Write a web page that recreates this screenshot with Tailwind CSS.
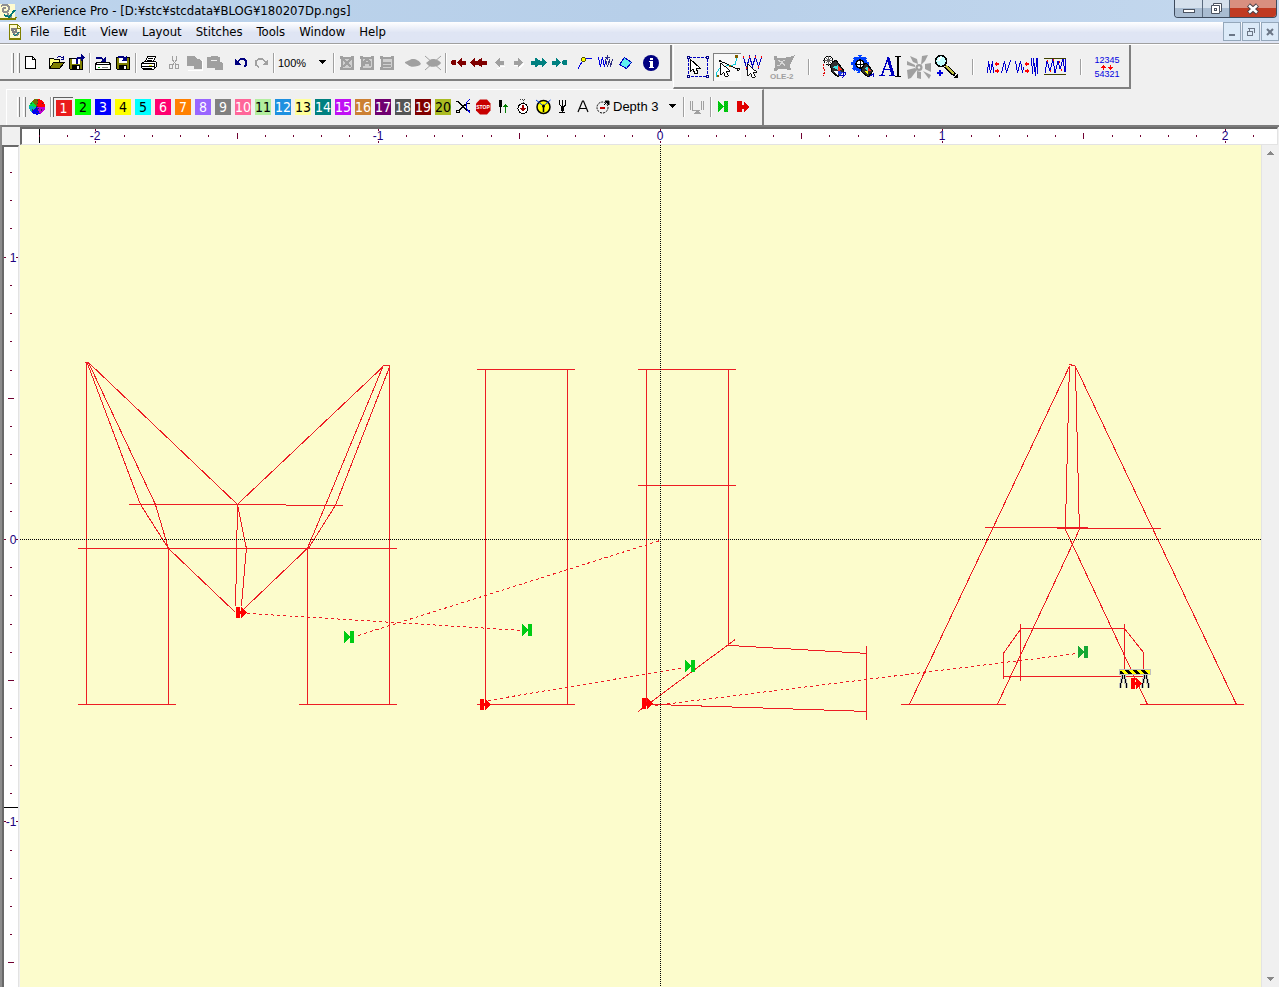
<!DOCTYPE html>
<html lang="en">
<head>
<meta charset="utf-8">
<title>eXPerience Pro</title>
<script src="https://cdn.jsdelivr.net/npm/@tailwindcss/browser@4"></script>
</head>
<body class="flex h-screen flex-col overflow-hidden bg-[#f0f0f0] font-['DejaVu_Sans_Condensed','DejaVu_Sans',sans-serif] text-[13px] text-black">

<!-- Shared symbols -->
<svg class="absolute h-0 w-0" aria-hidden="true">
  <defs>
    <pattern id="gdots" width="2" height="2" patternUnits="userSpaceOnUse"><rect width="2" height="2" fill="#00e800"/><path d="M0 0h1v1h-1zM1 1h1v1h-1z" fill="#00a01c"/></pattern>
    <symbol id="start" viewBox="0 0 12 12"><path d="M1 0l6 6-6 6zM7 0h4v12h-4zM6 5h1v2h-1z" fill="currentColor"/></symbol>
    <symbol id="end" viewBox="0 0 12 12"><path d="M1 1h4v11h-4zM5 5h2v3h-2zM6 1l6 5-6 6z" fill="#f00"/></symbol>
    <symbol id="cursor" viewBox="0 0 12 18"><path d="M1 1v13l3-3 2 5 3-1-2-5h4z" fill="#fff" stroke="#000"/></symbol>
  </defs>
</svg>

<header class="flex h-[22px] shrink-0 items-center bg-linear-to-r from-[#bdd4ec] via-[#b7cfe9] to-[#c4d8ee]">
  <svg class="h-5 w-[17px] shrink-0" viewBox="0 0 17 20" shape-rendering="crispEdges"><path d="M0 3h15v14h-15z" fill="#fffbd0"/><path d="M0 18h15l1-2" stroke="#808000" stroke-width="2" fill="none"/><path d="M1 5c4-3 9-1 8 3s-5 4-6 2 1-4 3-3M7 11l2 5h3" fill="none" stroke="#909090" stroke-width="2"/><path d="M4 14l5 2 6-7" fill="none" stroke="#007878" stroke-width="2"/></svg>
  <h1 class="ml-1 grow whitespace-nowrap">eXPerience Pro - [D:¥stc¥stcdata¥BLOG¥180207Dp.ngs]</h1>
  <div class="mr-0.5 flex h-[18px] self-start overflow-hidden rounded-b-sm border border-t-0 border-[#3d4a5c]">
    <button aria-label="Minimize" class="flex w-7 items-center justify-center border-r border-[#5a6a7e] bg-linear-to-b from-[#d5e0ec] from-50% to-[#a9bcd1] to-50%"><svg class="h-4 w-4" viewBox="0 0 16 16"><rect x="2.500" y="8.500" width="11" height="3" fill="#fff" stroke="#4a5260"/></svg></button>
    <button aria-label="Restore" class="flex w-[27px] items-center justify-center border-r border-[#5a6a7e] bg-linear-to-b from-[#d5e0ec] from-50% to-[#a9bcd1] to-50%"><svg class="h-4 w-4" viewBox="0 0 16 16"><path d="M5.500 2.500h8v8h-2v2h-8v-8h2z" fill="#fff" stroke="#4a5260"/><path d="M5.500 4.500h6v6" fill="none" stroke="#4a5260"/><rect x="6.500" y="7.500" width="2" height="2" fill="#fff" stroke="#4a5260"/></svg></button>
    <button aria-label="Close" class="flex w-[46px] items-center justify-center bg-linear-to-b from-[#d98f80] from-45% to-[#c03a22] to-45%"><svg class="h-4 w-4" viewBox="0 0 16 16"><path d="M3.500 4l9 8M12.500 4l-9 8" stroke="#4a4048" stroke-width="4.500"/><path d="M4 4.500l8 7M12 4.500l-8 7" stroke="#fff" stroke-width="2.500"/></svg></button>
  </div>
</header>

<nav class="flex h-[22px] shrink-0 items-center border-b border-[#a0a0a0] bg-linear-to-b from-white via-[#dfe5f4] to-[#dfe5f4] pb-0.5">
  <svg class="ml-2 h-4 w-[14px] shrink-0" viewBox="0 0 14 16" shape-rendering="crispEdges"><path d="M1.500 .5h8l3 3v11h-11z" fill="#fffbd0" stroke="#808000"/><path d="M9 1v3h3" fill="none" stroke="#808000"/><path d="M4 5h4v3h-3zM5 10l4 1 2-3" fill="none" stroke="#808080" stroke-width="2"/><path d="M5 10l2 2 4-4" fill="none" stroke="#008080"/><path d="M1 15h12" stroke="#808000" stroke-width="2"/></svg>
  <div class="ml-2 flex grow gap-[14px]">
    <button>File</button><button>Edit</button><button>View</button><button>Layout</button><button>Stitches</button><button>Tools</button><button>Window</button><button>Help</button>
  </div>
  <div class="flex h-[19px] gap-px text-[#6b7686]">
    <button aria-label="Minimize document" class="flex w-[18px] items-center justify-center border border-[#94a7ba] bg-[#dceaf8]"><svg class="h-4 w-4" viewBox="0 0 16 16" shape-rendering="crispEdges"><path d="M5 10h6v2h-6z" fill="currentColor"/></svg></button>
    <button aria-label="Restore document" class="flex w-[18px] items-center justify-center border border-[#94a7ba] bg-[#dceaf8]"><svg class="h-4 w-4" viewBox="0 0 16 16" shape-rendering="crispEdges"><path d="M5 4.500h7M11.500 4v5M6.500 5v2M4 7.500h6M4.500 7v5M4 11.500h6M9.500 7v5" stroke="currentColor" fill="none"/></svg></button>
    <button aria-label="Close document" class="flex w-[18px] items-center justify-center border border-[#94a7ba] bg-[#dceaf8]"><svg class="h-4 w-4" viewBox="0 0 16 16"><path d="M5 5l6 6M11 5l-6 6" stroke="currentColor" stroke-width="2"/></svg></button>
  </div>
</nav>

<div class="shrink-0 border-t border-white" role="toolbar" aria-label="Toolbars">
  <div class="flex h-11 items-start">
    <!-- Standard toolbar -->
    <div class="flex h-9 w-[672px] shrink-0 items-center border-r-2 border-b-2 border-[#808080] pt-[2px] pl-[11px]">
      <div class="mr-[1px] flex gap-1"><i class="h-5 w-[3px] border-l border-r border-l-white border-r-[#808080]"></i><i class="-ml-px h-5 w-[3px] border-l border-r border-l-white border-r-[#808080]"></i></div>
      <button aria-label="New" class="h-5 w-5"><svg viewBox="0 0 20 20" shape-rendering="crispEdges"><path d="M4.500 3.500h7l3 3v9h-10z" fill="#fff" stroke="#000"/><path d="M11.500 3.500v3h3" fill="none" stroke="#000"/></svg></button>
      <button aria-label="Open" class="ml-[6px] h-5 w-5"><svg viewBox="0 0 20 20" shape-rendering="crispEdges"><path d="M2.500 15.500v-10h4l1 1h5v3" fill="#ffff80" stroke="#000"/><path d="M2.500 15.500l4-6h11l-5 6z" fill="#808000" stroke="#000"/><path d="M10 4.500h1M11 3.500h3M14 4.500h2M16.500 3v4M14 6.500h3" stroke="#000080"/></svg></button>
      <button aria-label="Save as" class="h-5 w-5"><svg viewBox="0 0 20 20" shape-rendering="crispEdges"><path d="M2.500 5.500h13v11h-12l-1-1z" fill="#808000" stroke="#000"/><path d="M5 6h8v5h-8z" fill="#fff"/><path d="M5 12h8v4h-8z" fill="#000"/><path d="M10 13h2v3h-2z" fill="#fff"/><path d="M9.500 11v-4l2-2.500h4" fill="none" stroke="#000080" stroke-width="2"/><path d="M14 1l4 3.500-4 3.500z" fill="#000080"/></svg></button>
      <i class="mx-[2px] h-5 w-[2px] border-l border-r border-l-[#a0a0a0] border-r-white"></i>
      <button aria-label="Read design" class="h-5 w-5"><svg viewBox="0 0 20 20" shape-rendering="crispEdges"><path d="M3.500 9.500h13l1 2v5h-15v-5z" fill="#fff" stroke="#000"/><path d="M3 11.500h15" stroke="#000"/><path d="M5 14h2v1h-2z" fill="#00b000"/><path d="M9 14.500h6" stroke="#808080"/><path d="M3 4.500h5l3 3" fill="none" stroke="#000080" stroke-width="2"/><path d="M7 9h6v-6z" fill="#000080"/></svg></button>
      <button aria-label="Save design" class="h-5 w-5"><svg viewBox="0 0 20 20" shape-rendering="crispEdges"><path d="M3.500 4.500h13v12h-12l-1-1z" fill="#808000" stroke="#000"/><path d="M6 5h8v5h-8z" fill="#fff"/><path d="M6 12h8v4h-8z" fill="#000"/><path d="M11 13h2v3h-2z" fill="#fff"/><path d="M5 3.500h5l2 3" fill="none" stroke="#000080" stroke-width="2"/><path d="M8 8h6v-5z" fill="#000080"/></svg></button>
      <i class="mx-[2px] h-5 w-[2px] border-l border-r border-l-[#a0a0a0] border-r-white"></i>
      <button aria-label="Print" class="h-5 w-5"><svg viewBox="0 0 20 20" shape-rendering="crispEdges"><path d="M6.500 8.500l2-5h8l-2 5z" fill="#fff" stroke="#000"/><path d="M9 5.500h5M8 7.500h5" stroke="#000"/><path d="M2.500 10.500l3-2h11l1 1v4l-3 3h-10l-2-2z" fill="#fff" stroke="#000"/><path d="M2 10.500h13M2 13.500h13M15.500 10v6M4 15.500h9" stroke="#000" stroke-width="1"/><path d="M10 12h3v1h-3z" fill="#dede00"/></svg></button>
      <button aria-label="Cut" disabled class="ml-[5px] h-5 w-5"><svg viewBox="0 0 20 20" shape-rendering="crispEdges" fill="none" stroke="#a0a0a0"><path d="M8.500 3v4l4 5M12.500 3v4l-4 5"/><rect x="5.500" y="11.500" width="3" height="4"/><rect x="11.500" y="11.500" width="3" height="4"/></svg></button>
      <button aria-label="Copy" disabled class="h-5 w-5"><svg viewBox="0 0 20 20" shape-rendering="crispEdges"><path d="M4 17h7M18 7v10h-7" stroke="#fff" fill="none"/><path d="M3 3h7l3 3h2l3 3v7h-8v-3h-7z" fill="#a0a0a0"/></svg></button>
      <button aria-label="Paste" disabled class="h-5 w-5"><svg viewBox="0 0 20 20" shape-rendering="crispEdges"><path d="M3 4h3l1-1h6l1 1h2v5h1l2 2v6h-8v-2h-8z" fill="#a0a0a0"/><path d="M7 7h6" stroke="#f0f0f0"/></svg></button>
      <button aria-label="Undo" class="ml-[7px] h-5 w-5"><svg viewBox="0 0 20 20" shape-rendering="crispEdges"><path d="M4 6v6h6z" fill="#000080"/><path d="M6 9l4-3h3l2 2v4l-2 2" fill="none" stroke="#000080" stroke-width="1.500"/></svg></button>
      <button aria-label="Redo" disabled class="h-5 w-5"><svg viewBox="0 0 20 20" shape-rendering="crispEdges"><path d="M17 6v6h-6z" fill="#a0a0a0"/><path d="M15 9l-4-3h-3l-3 2v4l3 2" fill="none" stroke="#a0a0a0" stroke-width="1.500"/></svg></button>
      <i class="mx-[2px] h-5 w-[2px] border-l border-r border-l-[#a0a0a0] border-r-white"></i>
      <div class="relative h-5 w-[54px]">
        <select aria-label="Zoom" class="h-5 w-full appearance-none bg-transparent pb-0.5 pl-px font-['Liberation_Sans',sans-serif] text-[11px]"><option>100%</option></select>
        <svg class="pointer-events-none absolute top-1.5 right-[5px] h-2 w-2" viewBox="0 0 8 8" shape-rendering="crispEdges"><path d="M0 1h8l-4 4z"/></svg>
      </div>
      <i class="mx-[2px] h-5 w-[2px] border-l border-r border-l-[#a0a0a0] border-r-white"></i>
      <button aria-label="Scale" disabled class="h-5 w-5"><svg viewBox="0 0 20 20" shape-rendering="crispEdges"><path d="M5 5h11v11h-11z" fill="#d0d0d0"/><path d="M4.500 5v11M15.500 5v11M4 4.500h12M4 15.500h12M6 6l8 8M14 6l-8 8" stroke="#a0a0a0" stroke-width="2"/><path d="M3 3h3v3h-3zM14 3h3v3h-3zM3 14h3v3h-3zM14 14h3v3h-3z" fill="#a0a0a0"/></svg></button>
      <button aria-label="Center" disabled class="h-5 w-5"><svg viewBox="0 0 20 20" shape-rendering="crispEdges"><path d="M5 5h11v11h-11z" fill="#d0d0d0"/><path d="M4.500 5v11M15.500 5v11M4 4.500h12M4 15.500h12M7 13v-4l3-3 3 3v4M8 10h4" stroke="#a0a0a0" stroke-width="2" fill="none"/><path d="M3 3h3v3h-3zM14 3h3v3h-3zM3 14h3v3h-3zM14 14h3v3h-3z" fill="#a0a0a0"/></svg></button>
      <button aria-label="Fit" disabled class="h-5 w-5"><svg viewBox="0 0 20 20" shape-rendering="crispEdges"><path d="M5 5h11v11h-11z" fill="#d0d0d0"/><path d="M4.500 5v11M15.500 5v11M4 4.500h12M4 15.500h12M6 10h8M6 13h8" stroke="#a0a0a0" stroke-width="2"/><path d="M3 3h3v3h-3zM14 3h3v3h-3zM3 14h3v3h-3zM14 14h3v3h-3z" fill="#a0a0a0"/></svg></button>
      <button aria-label="Show" disabled class="ml-[6px] h-5 w-5"><svg viewBox="0 0 20 20"><path d="M4 12q7 4 14-1" stroke="#fff" fill="none"/><path d="M2 9c4-1 5-3 8-3s7 2 8 5c-2 3-11 4-13 1l-3-2z" fill="#a0a0a0"/></svg></button>
      <button aria-label="Hide" disabled class="h-5 w-5"><svg viewBox="0 0 20 20"><path d="M2 3l16 14M18 3l-16 14" stroke="#a0a0a0"/><path d="M3 10c3-2 4-4 7-4s7 2 8 4c-2 4-11 5-13 2z" fill="#a0a0a0"/></svg></button>
      <i class="mx-[2px] h-5 w-[2px] border-l border-r border-l-[#a0a0a0] border-r-white"></i>
      <button aria-label="To start" class="h-5 w-5"><svg viewBox="0 0 20 20" shape-rendering="crispEdges" fill="#800000"><path d="M3 7h3l1 1v3l-1 1h-3l-1-1v-3zM8 9.500l5-5v3h4v4h-4v3z"/></svg></button>
      <button aria-label="Back fast" class="h-5 w-5"><svg viewBox="0 0 20 20" shape-rendering="crispEdges" fill="#800000"><path d="M1 9.500l5-5v3h3l4-3v3h5v4h-5v3l-4-3h-3v3z"/></svg></button>
      <button aria-label="Back" disabled class="h-5 w-5"><svg viewBox="0 0 20 20" shape-rendering="crispEdges"><path d="M8 15h2v-2h6" stroke="#fff" fill="none"/><path d="M6 9.500l5-5v3h4v4h-4v3z" fill="#a0a0a0"/></svg></button>
      <button aria-label="Forward" disabled class="h-5 w-5"><svg viewBox="0 0 20 20" shape-rendering="crispEdges"><path d="M5 12.500h5v3l5-5" stroke="#fff" fill="none"/><path d="M14 9.500l-5-5v3h-4v4h4v3z" fill="#a0a0a0"/></svg></button>
      <button aria-label="Forward fast" class="h-5 w-5"><svg viewBox="0 0 20 20" shape-rendering="crispEdges" fill="#008080"><path d="M18 9.500l-5-5v3h-2l-5-3v3h-4v4h4v3l5-3h2v3z"/></svg></button>
      <button aria-label="To end" class="h-5 w-5"><svg viewBox="0 0 20 20" shape-rendering="crispEdges" fill="#008080"><path d="M14 7h3l1 1v3l-1 1h-3l-1-1v-3zM12 9.500l-5-5v3h-4v4h4v3z"/></svg></button>
      <button aria-label="Outline view" class="ml-[6px] h-5 w-5"><svg viewBox="0 0 20 20" shape-rendering="crispEdges"><path d="M3 16l5-9 1-1 8-1" fill="none" stroke="#0000e0"/><circle cx="8.500" cy="6.500" r="2" fill="#ff0" stroke="#505000"/></svg></button>
      <button aria-label="Stitch view" class="h-5 w-5"><svg viewBox="0 0 20 20" shape-rendering="crispEdges" fill="none"><path d="M3.500 4l2 10 2-10 2 10 2-10" stroke="#0000e0"/><path d="M10.500 6l2 8 2-8 1 8 2-8M12.500 2v5M10 4.500h5" stroke="#303080"/></svg></button>
      <button aria-label="Solid view" class="h-5 w-5"><svg viewBox="0 0 20 20" shape-rendering="crispEdges"><path d="M9.500 4.500l7 5-5 6-7-4z" fill="#60f0f0" stroke="#0000c0"/></svg></button>
      <button aria-label="Information" class="ml-[6px] h-5 w-5"><svg viewBox="0 0 20 20"><circle cx="10" cy="10" r="8" fill="#000080"/><path d="M9 5h3v2h-3zM8 8h4v6h1v1h-5v-1h1v-5h-1z" fill="#fff"/></svg></button>
    </div>

    <!-- Tool selection -->
    <div class="ml-px flex h-11 w-[458px] shrink-0 items-center border-r-2 border-b-2 border-l border-[#808080] border-l-white pt-[2px] pl-[10px]">
      <button aria-label="Select" class="h-7 w-7"><svg viewBox="0 0 28 28" shape-rendering="crispEdges"><rect x="4.500" y="4.500" width="19" height="19" fill="none" stroke="#0000c0" stroke-dasharray="3 1"/><path d="M3.500 3.500h2v2h-2zM22.500 3.500h2v2h-2zM3.500 22.500h2v2h-2zM22.500 22.500h2v2h-2z" fill="#fff" stroke="#000080"/><use href="#cursor" x="5" y="5" width="12" height="18"/></svg></button>
      <button aria-label="Edit outline" aria-pressed="true" class="mx-px flex h-7 w-7 items-center justify-center border-t border-l border-[#808080] bg-[#f8f8f8]"><svg viewBox="0 0 28 28" shape-rendering="crispEdges"><path d="M3 24v-5l3-4 8-3 8-1 2-9" fill="none" stroke="#00c8d8"/><path d="M6 7l19 9" stroke="#000"/><path d="M5.500 6.500h1v1h-1zM24 15h2v2h-2z" stroke="#000" fill="#fff"/><path d="M3 22h2v2h-2zM16 11h2v2h-2zM22 1h3v3h-3z" fill="#806000"/><use href="#cursor" x="6" y="8" width="12" height="18"/></svg></button>
      <button aria-label="Edit stitches" class="-ml-[3px] h-7 w-7"><svg viewBox="0 0 28 28" shape-rendering="crispEdges"><path d="M4.500 4l3 11 3-11 3 9 3-9 3 10 3-10" fill="none" stroke="#0000c0"/><path d="M4 3h1v2h-1zM10 3h1v2h-1zM16 3h1v2h-1zM22 3h1v2h-1zM7 14h1v2h-1zM19 13h1v2h-1z" fill="#f00"/><use href="#cursor" x="8" y="10" width="11" height="17"/></svg></button>
      <button aria-label="OLE-2" disabled class="ml-[2px] h-7 w-7"><svg viewBox="0 0 28 28" shape-rendering="crispEdges"><path d="M5 3h3v2h9v-1h3l6-2-4 8-1 3 1 4h-4l-1-1h-8l-1 2h-3v-3l1-1v-6l-1-1z" fill="#a0a0a0"/><path d="M9 7l3 2 4-2M8 12h3l2-3 3 4" stroke="#d8d8d8" fill="none"/><text x="1" y="26" font-family="Liberation Sans" font-size="8" font-weight="bold" fill="#a0a0a0">OLE-2</text></svg></button>
      <i class="mx-[11px] h-4 w-[2px] border-l border-r border-l-[#a0a0a0] border-r-white"></i>
      <button aria-label="Thread colors" class="h-7 w-7"><svg viewBox="0 0 28 28" shape-rendering="crispEdges"><path d="M4 8l-2 6 2 4-2 5" fill="none" stroke="#e00000" stroke-dasharray="2 1"/><path d="M9 11l6-4 8 11-6 6-6-5z" fill="#303030" stroke="#000"/><path d="M11 14l6-2v5z" fill="#40e0e0"/><path d="M17 12l4 5-4 1z" fill="#ff3020"/><path d="M12 18h5v4z" fill="#fff"/><path d="M17 18l5 1-4 4z" fill="#2040e0"/><circle cx="7.500" cy="7.500" r="4.500" fill="#fff" stroke="#000"/><path d="M5 5l5 5M10 5l-5 5M7.500 3v9M3 7.500h9" stroke="#606060"/><path d="M18 22h4v-3h2v3l-3 3" stroke="#0000c0" fill="none"/></svg></button>
      <button aria-label="Machine settings" class="h-7 w-7"><svg viewBox="0 0 28 28" shape-rendering="crispEdges"><circle cx="11" cy="11" r="6" fill="#fff" stroke="#0040ff" stroke-width="3"/><circle cx="11" cy="11" r="8" fill="none" stroke="#0040ff" stroke-width="2" stroke-dasharray="3 3"/><path d="M12 12l5-2 7 8-5 6-6-5z" fill="#303030" stroke="#000"/><path d="M15 15l4-1v4z" fill="#40e0e0"/><path d="M19 14l3 4h-3z" fill="#ff3020"/><path d="M15 18h4v4z" fill="#ff0"/><circle cx="11" cy="11" r="4" fill="#fff" stroke="#000" stroke-width="1.500"/><path d="M8 11h6M11 8v6" stroke="#000"/><path d="M20 24l4-3v3" stroke="#0000c0" fill="none"/></svg></button>
      <button aria-label="Text" class="h-7 w-7"><svg viewBox="0 0 28 28" shape-rendering="crispEdges"><path d="M2 22.500h6M12 22.500h6M5 22l6-17 5 17M7 16.500h8" stroke="#0000c0" stroke-width="1.500" fill="none"/><path d="M11 5l5 17" stroke="#0000c0" stroke-width="3"/><path d="M18 3.500h2l1 1 1-1h2M18 23.500h2l1-1 1 1h2M21 4v19" stroke="#000" fill="none" stroke-width="1.500"/></svg></button>
      <button aria-label="Pattern" disabled class="h-7 w-7"><svg viewBox="0 0 28 28"><g fill="#a0a0a0"><path d="M5 3l7 3 1 5-5-2zM17 3l6-1-3 6-4 4zM2 8l8 4v2l-8-2zM20 11l6-1v9l-6-3zM2 17l8-2 2 2-6 8-3 1zM12 18l4 1v7l-4-1zM18 18l8 4-2 4z"/><circle cx="14" cy="14.500" r="3.500"/></g><circle cx="14" cy="14.500" r="1.200" fill="#f0f0f0"/></svg></button>
      <button aria-label="Zoom tool" class="h-7 w-7"><svg viewBox="0 0 28 28" shape-rendering="crispEdges"><path d="M12 13l10 9" stroke="#000" stroke-width="4"/><path d="M13 13l8 8" stroke="#c0c040" stroke-width="2"/><path d="M20 25h5v-4z"/><circle cx="8" cy="8" r="5.500" fill="#c0ffff" stroke="#000" stroke-width="1.500"/><path d="M5 8l3-4" stroke="#fff" stroke-width="2"/><path d="M4 20h6M7 17v6" stroke="#0000e0" stroke-width="2"/></svg></button>
      <i class="mx-[11px] h-4 w-[2px] border-l border-r border-l-[#a0a0a0] border-r-white"></i>
      <button aria-label="Decrease density" class="h-7 w-7"><svg viewBox="0 0 28 28" shape-rendering="crispEdges" fill="none"><path d="M2.500 20l1-12 2 12 2-12 1 12M16.500 20l3-12 2 12 4-13" stroke="#0000d0"/><path d="M10 10h4v2h-4zM10 17h4v2h-4z" fill="#f00"/><path d="M11 9h1v4h-1zM12 16h1v4h-1z" fill="#f00"/></svg></button>
      <button aria-label="Increase density" class="h-7 w-7"><svg viewBox="0 0 28 28" shape-rendering="crispEdges" fill="none"><path d="M2.500 8l2 12 3-12 2 12 1-6M18.500 5l1 16 1-16 2 18 1-18 1 16v-16" stroke="#0000d0"/><path d="M12 10h4v2h-4zM12 17h4v2h-4z" fill="#f00"/><path d="M13 9h1v4h-1zM14 16h1v4h-1z" fill="#f00"/></svg></button>
      <button aria-label="Fit stitches" class="h-7 w-7"><svg viewBox="0 0 28 28" shape-rendering="crispEdges" fill="none"><path d="M3 5.500h22M3 21.500h22" stroke="#404000"/><path d="M4 20l2-12 3 10 3-12 2 14 3-12 2 8 3-10 2 13v-13" stroke="#0000d0"/><path d="M6 7v2M12 6v2M18 8v2M9 17v2M20 16v2" stroke="#f00"/></svg></button>
      <i class="mx-[11px] h-4 w-[2px] border-l border-r border-l-[#a0a0a0] border-r-white"></i>
      <button aria-label="Reverse order" class="flex h-[23px] w-7 flex-col items-center justify-between font-['Liberation_Sans',sans-serif] text-[9px] leading-[9px] text-[#0000e0]"><span>12345</span><svg class="h-[5px] w-[14px] shrink-0" viewBox="0 0 14 5" shape-rendering="crispEdges" fill="#f00"><path d="M3 0h1v5h-1zM1 2h5v1h-5zM2 1h3v1h-3zM10 0h1v5h-1zM8 2h5v1h-5zM9 3h3v1h-3z"/></svg><span>54321</span></button>
    </div>
  </div>

  <!-- Color and command toolbar -->
  <div class="ml-1.5 flex h-9 w-[758px] items-center border-t border-r-2 border-l border-[#808080] border-t-white border-l-white pb-px pl-[10px]">
    <div class="flex gap-1"><i class="h-5 w-[3px] border-l border-r border-l-white border-r-[#808080]"></i><i class="-ml-px h-5 w-[3px] border-l border-r border-l-white border-r-[#808080]"></i></div>
    <button aria-label="Color wheel" class="mx-px h-5 w-5"><svg viewBox="0 0 20 20" shape-rendering="crispEdges"><path d="M10 10L5 4a8 8 0 0 1 6-2z" fill="#707000"/><path d="M10 10L11 2a8 8 0 0 1 7 8z" fill="#f00"/><path d="M10 10h8a8 8 0 0 1-5 7z" fill="#c000d0"/><path d="M10 10l3 7a8 8 0 0 1-9-2z" fill="#0000f0"/><path d="M10 10l-6 5a8 8 0 0 1-2-6z" fill="#00b0c0"/><path d="M10 10L2 9a8 8 0 0 1 3-5z" fill="#00e040"/><path d="M10 3v14M4 6l12 8M16 6l-12 8" stroke="#403040" stroke-dasharray="1 2"/></svg></button>
    <i class="ml-[2px] h-5 w-[2px] border-l border-r border-l-[#a0a0a0] border-r-white"></i>
    <div id="palette" class="ml-px flex"></div>
    <button aria-label="Trim" class="h-5 w-5"><svg viewBox="0 0 20 20" shape-rendering="crispEdges"><path d="M3 4.500h2l5 5 4 4h3M17 6.500h-3l-4 3-4 4" stroke="#000" stroke-width="1.500" fill="none"/><rect x="3.500" y="13.500" width="3" height="2" fill="none" stroke="#000"/><path d="M17 2l-3 3-1 4 1 3 3 4" stroke="#0000e0" fill="none"/></svg></button>
    <button aria-label="Stop" class="h-5 w-5"><svg viewBox="0 0 20 20"><path d="M7 2.500h7l3.500 4v7l-3.500 4h-7l-4-4v-7z" fill="#c80000"/><text x="10" y="12" text-anchor="middle" font-family="Liberation Sans" font-size="5" font-weight="bold" fill="#fff">STOP</text></svg></button>
    <button aria-label="Needle up" class="h-5 w-5"><svg viewBox="0 0 20 20" shape-rendering="crispEdges"><path d="M6 3h3v6l-1 2v5h-1v-5l-1-2z"/><path d="M12 7h1v9h-1zM11 8h3v1h-3zM10 9h5v1h-5z" fill="#008000"/></svg></button>
    <button aria-label="Bobbin" class="h-5 w-5"><svg viewBox="0 0 20 20" shape-rendering="crispEdges"><path d="M7 2.500h6M10 3v5" stroke="#404040" stroke-dasharray="1 1"/><circle cx="10" cy="11.500" r="5" fill="#fff" stroke="#000"/><path d="M9 8h2v3h2l-3 4-3-4h2z" fill="#a00000"/></svg></button>
    <button aria-label="Timer" class="h-5 w-5"><svg viewBox="0 0 20 20"><circle cx="10.500" cy="10" r="6.500" fill="#ff0" stroke="#000" stroke-width="1.500"/><path d="M3 3l7.500 6 7-6" fill="none" stroke="#0040e0"/><path d="M10.500 9v6" stroke="#000" stroke-width="1.500"/><circle cx="10.500" cy="9" r="1.500"/></svg></button>
    <button aria-label="Fork needle" class="h-5 w-5"><svg viewBox="0 0 20 20" shape-rendering="crispEdges"><path d="M6 3h1v5l2 1v-6h1v6l2-1v-5h1v5l-2 2v3l-1 2h-1l-1-2v-3l-2-2zM6 15h6v1h-6z"/></svg></button>
    <button aria-label="Alphabet" class="h-5 w-5"><svg viewBox="0 0 20 20"><path d="M5 15l4.500-11h1L15 15M7 11.500h6" fill="none" stroke="#000" stroke-width="1.200"/></svg></button>
    <svg class="h-5 w-5 shrink-0" viewBox="0 0 20 20"><circle cx="9.500" cy="10.500" r="5.500" fill="none" stroke="#000" stroke-dasharray="2 1"/><path d="M12 4h4v4zM11 8l3-3" stroke="#000"/><path d="M7 11h5" stroke="#c00000" stroke-width="2"/></svg>
    <div class="relative h-5 w-[69px]">
      <select aria-label="Depth" class="h-5 w-full appearance-none bg-transparent pb-0.5 font-['Liberation_Sans',sans-serif] text-[13px] leading-4"><option>Depth 3</option></select>
      <svg class="pointer-events-none absolute top-1.5 right-1.5 h-2 w-2" viewBox="0 0 8 8" shape-rendering="crispEdges"><path d="M0 1h8l-4 4z"/></svg>
    </div>
    <i class="ml-px h-5 w-[2px] border-l border-r border-l-[#a0a0a0] border-r-white"></i>
    <button aria-label="Connect" disabled class="ml-0.5 h-5 w-5"><svg viewBox="0 0 20 20" shape-rendering="crispEdges"><path d="M3.500 4v9M5.500 4v9M7 13.500h6M14.500 4v9M16.500 4v9M5 13.500h3" stroke="#a0a0a0"/><path d="M10 13l4 4h-8z" fill="#a0a0a0"/></svg></button>
    <i class="ml-[3px] h-5 w-[2px] border-l border-r border-l-[#a0a0a0] border-r-white"></i>
    <button aria-label="Start point" class="ml-px h-5 w-5"><svg viewBox="0 0 20 20" shape-rendering="crispEdges"><path d="M5 4l6 6-6 5zM11 4h4v11h-4z" fill="url(#gdots)"/></svg></button>
    <button aria-label="End point" class="h-5 w-5"><svg viewBox="0 0 20 20" shape-rendering="crispEdges"><path d="M4 4h5v11h-5zM9 8h2v-4l5 6-5 5v-3h-2z" fill="#e00000"/></svg></button>
  </div>
</div>

<!-- Workspace: rulers, design canvas, scroll bar -->
<main class="grid min-h-0 grow grid-cols-[17px_minmax(0,1fr)_18px] grid-rows-[18px_minmax(0,1fr)] border-t-2 border-l-2 border-t-[#7c7c7c] border-l-[#8c8c8c]">
  <div class="bg-[#f0f0f0]"></div>
  <div class="col-span-2 mr-px ml-px border-t-2 border-r border-b border-l-2 border-[#696969] border-r-[#e3e3e3] border-b-[#e3e3e3] bg-white">
    <svg id="topRuler" class="block h-full w-full" shape-rendering="crispEdges"></svg>
  </div>
  <div class="border-t-2 border-r border-l-2 border-[#696969] border-r-[#e3e3e3] bg-white">
    <svg id="leftRuler" class="block h-full w-full" shape-rendering="crispEdges"></svg>
  </div>
  <div class="ml-px min-w-0 bg-[#fcfccc]">
    <svg class="block h-full w-full" shape-rendering="crispEdges" fill="none" role="img" aria-label="MILA lettering outline">
      <g transform="translate(-20 -145)">
        <g transform="translate(.4 .4)" stroke="#ed1c24">
          <path d="M85 362H89M86 362V704M89 363L237 504M87 363L140 504 168 548M88 362L155 504 168 548M383 365H389V704M383 366L237 504M383 365L325 505 307 548M389 367L335 505 308 548M129 504H286M286 505H343M237 504L236 570 235 606M237 504L246 548 241 606M78 548H397M168 548L235 612M307 548L242 610M168 548V704M307 548V704M78 704H176M299 704H397"/>
          <path d="M477 369H575M485 369V704M567 369V704M477 704H575"/>
          <path d="M638 369H736M646 369V704M728 369V645M638 485H736M735 639L638 711M728 645L866 653M866 646V720M652 704L866 711"/>
          <path d="M1069 364H1071V365H1075M1069 366L909 704M1075 366L1236 704M1069 366L1065 529 1147 704M1075 366L1079 529 997 704M985 527H1088M1057 528H1161M901 704H1006M1140 704H1244M1020 628H1124M1003 676H1143M1020 624V681M1124 624V681M1020 629L1003 653V679M1124 628L1143 652V679"/>
          <path stroke-dasharray="3 3" d="M247 613L521 630M358 635L660 540M488 700L684 667M655 705L1078 653"/>
        </g>
        <path d="M20 539.500H4000M660.500 145V4000" stroke="#000" stroke-dasharray="1 1"/>
        <g class="text-[#00cc14]">
          <use href="#start" x="343" y="631" width="12" height="12"/>
          <use href="#start" x="521" y="624" width="12" height="12"/>
          <use href="#start" x="684" y="660" width="12" height="12"/>
        </g>
        <g class="text-[#16a834]"><use href="#start" x="1077" y="646" width="12" height="12"/></g>
        <use href="#end" x="235" y="606" width="12" height="12"/>
        <use href="#end" x="479" y="698" width="12" height="12"/>
        <use href="#end" x="641" y="697" width="12" height="12"/>
        <path d="M1123 674L1120 688M1124 674L1127 688M1145 674L1142 688M1146 674L1149 688" stroke="#c0c0c0" stroke-width="3"/>
        <path d="M1123 674L1120 688M1124 674L1127 688M1145 674L1142 688M1146 674L1149 688" stroke="#000"/>
        <path d="M1119 669H1151V675H1119Z" fill="#c0c0c0"/><path d="M1120 670H1150V674H1120Z" fill="#ff0"/>
        <path d="M1120 671h1l3 3h-4zM1125 670h4l3 4h-4zM1133 670h4l3 4h-4zM1141 670h4l3 4h-4z" fill="#000"/>
        <use href="#end" x="1130" y="677" width="12" height="12"/>
      </g>
    </svg>
  </div>
  <div class="flex flex-col justify-between border-l border-[#e3e3e3] bg-[#f0f0f0]">
    <button aria-label="Scroll up" class="flex h-4 w-4 items-center justify-center"><svg class="h-2 w-2" viewBox="0 0 8 8" shape-rendering="crispEdges"><path d="M4 2l4 4h-8z" fill="#888"/></svg></button>
    <button aria-label="Scroll down" class="flex h-4 w-4 items-center justify-center"><svg class="h-2 w-2" viewBox="0 0 8 8" shape-rendering="crispEdges"><path d="M0 2h8l-4 4z" fill="#888"/></svg></button>
  </div>
</main>

<script>
  // Thread palette: background, text color
  const palette = [
    ['#ea1c1c', '#fff'], ['#00ff00', '#000'], ['#0000ff', '#fff'], ['#ffff00', '#000'], ['#00ffff', '#000'],
    ['#ff0070', '#fff'], ['#ff8000', '#fff'], ['#9966ff', '#fff'], ['#808080', '#fff'], ['#ff6699', '#fff'],
    ['#b2ee9e', '#000'], ['#1e90e0', '#fff'], ['#ffff99', '#000'], ['#008080', '#fff'], ['#c010f4', '#fff'],
    ['#cc8033', '#fff'], ['#700070', '#fff'], ['#555555', '#fff'], ['#800000', '#fff'], ['#aabb22', '#000']
  ];
  document.getElementById('palette').innerHTML = palette.map(([bg, fg], i) =>
    `<button class="flex h-5 w-5 items-center justify-center ${i ? '' : 'border-t border-l border-[#606060]'}" aria-label="Thread ${i + 1}"><span class="flex h-4 w-4 items-center justify-center overflow-hidden text-[14px] leading-4" style="background:${bg};color:${fg}">${i + 1}</span></button>`
  ).join('');

  // Ruler ticks, in tenths of an inch: taller at the half inch, label at the inch
  const UNIT = 282.3;
  const MARK = '#700030';
  const H_RANGE = [-22, 21];
  const V_RANGE = [-15, 13];
  const rect = (x, y, w, h, c) => `<rect x="${x}" y="${y}" width="${w}" height="${h}" fill="${c}"/>`;
  const label = (x, y, t) => `<text x="${x}" y="${y}" text-anchor="middle" font-family="Liberation Sans" font-size="12" fill="#200080">${t}</text>`;

  let topMarks = rect(17, 0, 1, 14, '#000');
  for (let i = H_RANGE[0]; i <= H_RANGE[1]; i++) {
    const x = Math.round(638 + i * UNIT / 10);
    if (i % 10 === 0) topMarks += rect(x, 0, 1, 2, MARK) + rect(x, 12, 1, 2, MARK) + label(x, 11, i / 10);
    else if (i % 5 === 0) topMarks += rect(x, 4, 1, 6, MARK);
    else topMarks += rect(x, 6, 1, 2, MARK);
  }
  document.getElementById('topRuler').innerHTML = topMarks;

  let leftMarks = rect(0, 660, 14, 1, '#000');
  for (let i = V_RANGE[0]; i <= V_RANGE[1]; i++) {
    const y = Math.round(392 - i * UNIT / 10);
    if (i % 10 === 0) leftMarks += rect(0, y, 2, 1, MARK) + rect(12, y, 2, 1, MARK) + label(i < 0 ? 7 : 9, y + 5, i / 10);
    else if (i % 5 === 0) leftMarks += rect(4, y, 6, 1, MARK);
    else leftMarks += rect(6, y, 2, 1, MARK);
  }
  document.getElementById('leftRuler').innerHTML = leftMarks;
</script>
</body>
</html>
